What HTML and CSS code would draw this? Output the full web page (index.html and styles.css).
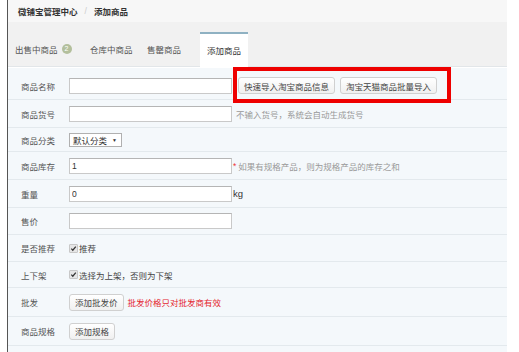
FILE: index.html
```html
<!DOCTYPE html>
<html lang="zh-CN">
<head>
  <meta charset="UTF-8">
  <title>添加商品</title>
  <link rel="stylesheet" href="styles.css">
</head>
<body>

  <div class="page">
    <div class="crumbs">
      <span class="crumb">微铺宝管理中心</span>
      <span class="sep">/</span>
      <span class="crumb">添加商品</span>
    </div>

    <div class="tabs">
      <div class="tab tab-sale">出售中商品 <span class="badge">2</span></div>
      <div class="tab tab-store">仓库中商品</div>
      <div class="tab tab-sold">售罄商品</div>
      <div class="tab active">添加商品</div>
    </div>

    <div class="form">
      <div class="row">
        <div class="label">商品名称</div>
        <input class="text" type="text">
        <div class="imports">
          <button class="btn">快速导入淘宝商品信息</button>
          <button class="btn">淘宝天猫商品批量导入</button>
        </div>
      </div>

      <div class="row">
        <div class="label">商品货号</div>
        <input class="text" type="text">
        <span class="hint">不输入货号，系统会自动生成货号</span>
      </div>

      <div class="row row-small">
        <div class="label">商品分类</div>
        <div class="select">默认分类 <span class="arrow">▼</span></div>
      </div>

      <div class="row">
        <div class="label">商品库存</div>
        <input class="text" type="text" value="1">
        <span class="star">*</span>
        <span class="hint">如果有规格产品，则为规格产品的库存之和</span>
      </div>

      <div class="row">
        <div class="label">重量</div>
        <input class="text" type="text" value="0">
        <span class="unit">kg</span>
      </div>

      <div class="row row-short">
        <div class="label">售价</div>
        <input class="text" type="text">
      </div>

      <div class="row row-short">
        <div class="label">是否推荐</div>
        <span class="check"><svg viewBox="0 0 8 8" width="7" height="7"><path d="M1.5 4.2 L3.2 6 L6.6 1.8" fill="none" stroke="#333" stroke-width="1.4"/></svg></span>
        <span class="check-text">推荐</span>
      </div>

      <div class="row row-check">
        <div class="label">上下架</div>
        <span class="check"><svg viewBox="0 0 8 8" width="7" height="7"><path d="M1.5 4.2 L3.2 6 L6.6 1.8" fill="none" stroke="#333" stroke-width="1.4"/></svg></span>
        <span class="check-text">选择为上架，否则为下架</span>
      </div>

      <div class="row row-btn">
        <div class="label">批发</div>
        <button class="btn">添加批发价</button>
        <span class="warn">批发价格只对批发商有效</span>
      </div>

      <div class="row row-btn">
        <div class="label">商品规格</div>
        <button class="btn">添加规格</button>
      </div>
    </div>

    <!-- annotation box round the import buttons -->
    <div class="mark"></div>
  </div>

</body>
</html>
```

FILE: styles.css
```css
body {
  margin: 0;
  background: #fff;
  font-family: "Liberation Sans", "Noto Sans CJK SC", sans-serif;
  font-size: 8.5px;
  color: #444;
}

.page {
  position: relative;
  margin-left: 7px;
  width: 499px;
  height: 352px;
  border-left: 1px solid #555;
  background: #f6f6f6;
}

.crumbs {
  height: 22px;
  display: flex;
  align-items: center;
  padding-left: 10px;
  background: #f7f7f7;
  font-weight: bold;
  color: #333;
}

.sep {
  color: #ccc;
  font-weight: normal;
  margin: 0 7px;
}

.tabs {
  height: 44px;
  display: flex;
  align-items: flex-end;
  background: #f1f1f1;
  border-bottom: 1px solid #e2e6e9;
}

.tab {
  height: 34px;
  display: flex;
  align-items: center;
  color: #555;
}

.tab-sale {
  padding-left: 7px;
  width: 75px;
}

.tab-store {
  width: 57px;
}

.tab-sold {
  width: 53px;
}

.tab.active {
  height: 32px;
  padding: 0 7px 1px;
  background: #fff;
  border-top: 2px solid #8fb1c2;
  color: #333;
  margin-bottom: -1px;
}

.badge {
  display: inline-block;
  width: 10px;
  height: 10px;
  margin-left: 4px;
  border-radius: 50%;
  background: #b3bf9c;
  color: #fff;
  font-size: 7px;
  line-height: 10px;
  text-align: center;
}

.form {
  background: #f4f8fb;
  padding-top: 4px;
  height: 280px;
  border-top: 1px solid #fff;
}

.row {
  display: flex;
  align-items: center;
  min-height: 28px;
  padding-left: 13px;
  border-bottom: 1px solid #e3e9ed;
  box-sizing: border-box;
}

.row-small {
  min-height: 24px;
}

.row-short {
  min-height: 27px;
}

.row-check {
  min-height: 26px;
}

.row-btn {
  min-height: 29px;
}

.label {
  width: 48px;
  color: #555;
}

.text {
  width: 163px;
  height: 16px;
  box-sizing: border-box;
  margin: 0;
  padding: 0 2px;
  border: 1px solid #c9c9c9;
  border-top-color: #b5b5b5;
  background: #fff;
  font-family: inherit;
  font-size: 8.5px;
  color: #333;
}

.imports {
  display: flex;
  gap: 5px;
  margin-left: 6px;
}

.btn {
  height: 17px;
  padding: 0 5px;
  border: 1px solid #d0d0d0;
  border-radius: 3px;
  background: linear-gradient(#fff, #f0f0f0);
  font-family: inherit;
  font-size: 8.5px;
  color: #444;
}

.hint {
  margin-left: 4px;
  color: #999;
}

.star {
  color: #e33;
  margin-left: 1px;
}

.star + .hint {
  margin-left: 2px;
}

.unit {
  font-size: 9.5px;
  color: #333;
  margin-left: 1px;
}

.select {
  display: flex;
  align-items: center;
  height: 12px;
  padding: 0 4px 0 3px;
  border: 1px solid #b0b0b0;
  background: #fff;
  color: #333;
}

.arrow {
  font-size: 5px;
  margin-left: 5px;
}

.check {
  display: inline-flex;
  align-items: center;
  justify-content: center;
  width: 7px;
  height: 7px;
  border: 1px solid #c8c8c8;
  border-radius: 1px;
  background: #e6e6e6;
  margin-right: 1px;
}

.check-text {
  color: #444;
}

.warn {
  margin-left: 4px;
  color: #e4262e;
}

.mark {
  position: absolute;
  left: 225px;
  top: 67px;
  width: 218px;
  height: 36px;
  box-sizing: border-box;
  border: 4px solid #ee0000;
}
```
